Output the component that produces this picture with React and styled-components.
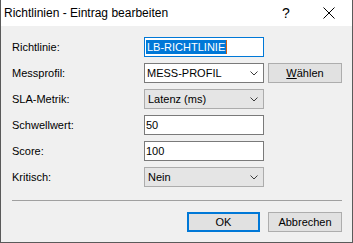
import React from 'react';
import styled, { createGlobalStyle } from 'styled-components';

const GlobalStyle = createGlobalStyle`
  html, body {
    margin: 0;
    padding: 0;
    background: #ffffff;
  }
  * {
    box-sizing: border-box;
  }
`;

const Window = styled.div`
  width: 353px;
  height: 243px;
  border: 1px solid #5a5a5a;
  border-top: none;
  background: #f0f0f0;
  display: flex;
  flex-direction: column;
  font-family: "Liberation Sans", Arial, sans-serif;
  font-size: 11px;
  color: #000;
`;

const TitleBar = styled.div`
  height: 26px;
  background: #ffffff;
  display: flex;
  align-items: center;
  padding-left: 3px;
`;

const Title = styled.div`
  flex: 1;
  font-size: 12px;
  padding-bottom: 1px;
`;

const TitleButton = styled.div`
  width: ${p => p.width || 40}px;
  height: 26px;
  display: flex;
  align-items: center;
  justify-content: center;
  font-size: 14px;
  color: #000;
`;

const Form = styled.div`
  display: flex;
  flex-direction: column;
  gap: 6px;
  padding: 11px 10px 0 11px;
`;

const Row = styled.div`
  display: flex;
  align-items: center;
  height: 20px;
`;

const Label = styled.div`
  width: 132px;
`;

const TextBox = styled.div`
  width: 120px;
  height: 20px;
  background: #ffffff;
  border: 1px solid ${p => (p.focused ? '#0078d7' : '#7a7a7a')};
  display: flex;
  align-items: center;
  padding-left: 1px;
  white-space: nowrap;
`;

const Selected = styled.span`
  background: #0078d7;
  color: #ffffff;
  padding: 1px 1px;
  border-right: 1px solid #d06010;
`;

const Combo = styled.div`
  width: 120px;
  height: 20px;
  background: ${p => (p.editable ? '#ffffff' : '#e5e5e5')};
  border: 1px solid ${p => (p.editable ? '#7a7a7a' : '#acacac')};
  display: flex;
  align-items: center;
  padding-left: ${p => (p.editable ? '2px' : '3px')};
  padding-right: 5px;
`;

const ComboText = styled.span`
  flex: 1;
`;

const Button = styled.div`
  width: ${p => p.width || 74}px;
  height: 20px;
  background: #e1e1e1;
  border: ${p => (p.primary ? '2px solid #0078d7' : '1px solid #adadad')};
  display: flex;
  align-items: center;
  justify-content: center;
  margin-left: ${p => p.gap || 0}px;
`;

const Separator = styled.div`
  height: 1px;
  background: #a0a0a0;
  margin: 13px 10px 0 11px;
`;

const Footer = styled.div`
  display: flex;
  justify-content: flex-end;
  padding: 11px 10px 0 0;
`;

const Chevron = () => (
  <svg width="8" height="5" viewBox="0 0 8 5">
    <path d="M0.5 0.5 L4 4 L7.5 0.5" fill="none" stroke="#3c3c3c" strokeWidth="1" />
  </svg>
);

const ComboBox = ({ value, editable }) => (
  <Combo editable={editable}>
    <ComboText>{value}</ComboText>
    <Chevron />
  </Combo>
);

const App = () => (
  <>
    <GlobalStyle />
    <Window>
      <TitleBar>
        <Title>Richtlinien - Eintrag bearbeiten</Title>
        <TitleButton width={40}>?</TitleButton>
        <TitleButton width={46}>
          <svg width="12" height="12" viewBox="0 0 12 12">
            <path d="M0.5 0.5 L11.5 11.5 M11.5 0.5 L0.5 11.5" stroke="#000" strokeWidth="1" />
          </svg>
        </TitleButton>
      </TitleBar>
      <Form>
        <Row>
          <Label>Richtlinie:</Label>
          <TextBox focused><Selected>LB-RICHTLINIE</Selected></TextBox>
        </Row>
        <Row>
          <Label>Messprofil:</Label>
          <ComboBox value="MESS-PROFIL" editable />
          <Button gap={4}><span><u>W</u>ählen</span></Button>
        </Row>
        <Row>
          <Label>SLA-Metrik:</Label>
          <ComboBox value="Latenz (ms)" />
        </Row>
        <Row>
          <Label>Schwellwert:</Label>
          <TextBox>50</TextBox>
        </Row>
        <Row>
          <Label>Score:</Label>
          <TextBox>100</TextBox>
        </Row>
        <Row>
          <Label>Kritisch:</Label>
          <ComboBox value="Nein" />
        </Row>
      </Form>
      <Separator />
      <Footer>
        <Button primary width={73}>OK</Button>
        <Button gap={8}>Abbrechen</Button>
      </Footer>
    </Window>
  </>
);

export default App;
